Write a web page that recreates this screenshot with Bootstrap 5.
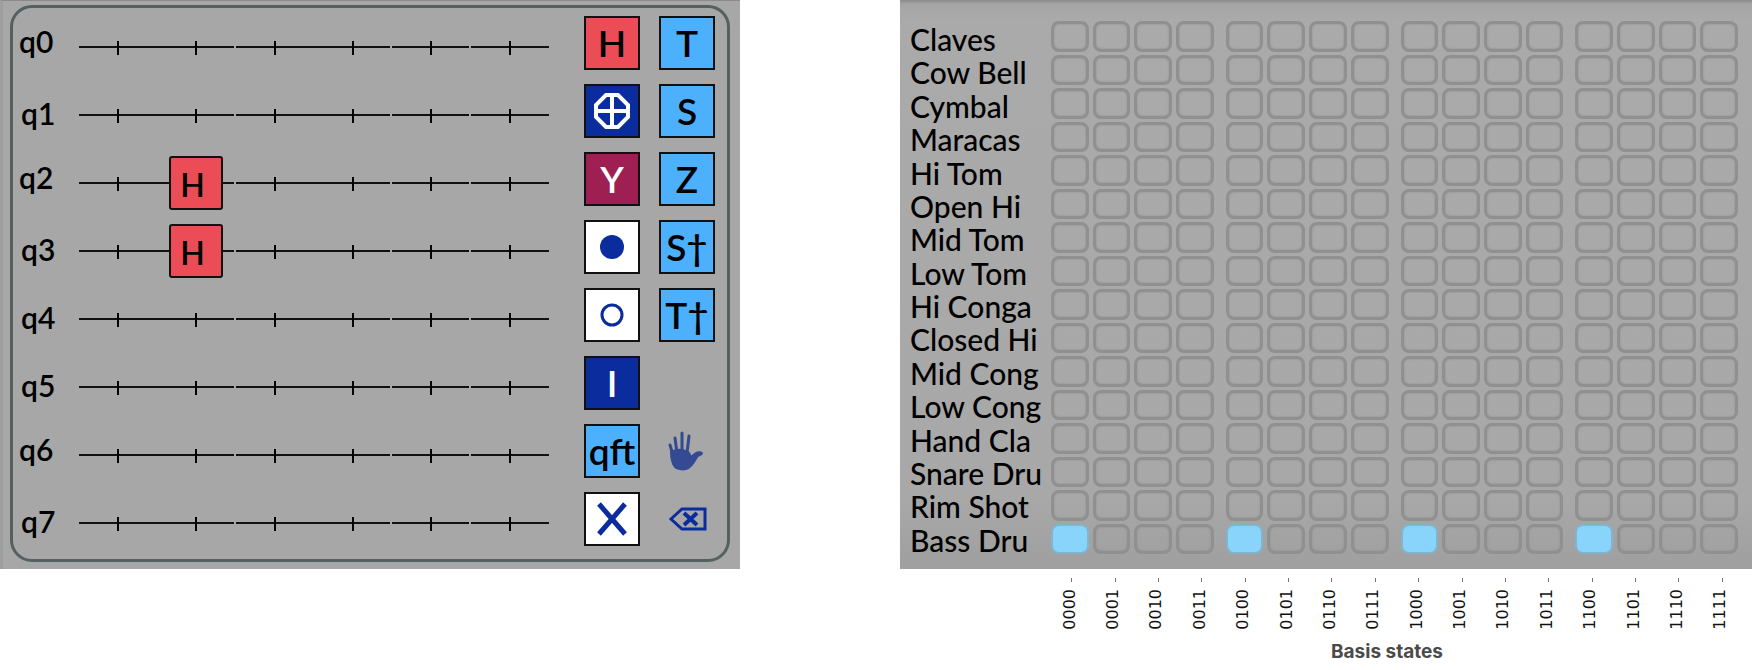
<!DOCTYPE html>
<html lang="en">
<head>
<meta charset="utf-8">
<meta name="viewport" content="width=device-width, initial-scale=1">
<title>Quantum drum sequencer</title>
<link rel="stylesheet" href="https://cdn.jsdelivr.net/npm/bootstrap@5.3.0/dist/css/bootstrap.min.css">
<style>
  :root { --panel: #a7a7a7; --frame: #556060; --navy: #0b2c9c; --sky: #4cb0fc; --red: #ec4c56; --plum: #9e1f51; }
  body { background: #fff; color: #000; font-family: Lato, "Liberation Sans", sans-serif; font-weight: 500; }
  .device { display: grid; grid-template-columns: 740fr 160fr 852fr; align-items: start; }
  .device > .steps-side { grid-column: 3; }

  /* circuit */
  .circuit { background: var(--panel); border-top: 1px solid #8a8a8a; border-left: 3px solid #9e9e9e; padding: 4px 10px 7px 7px; }
  .circuit-frame { border: 3px solid var(--frame); border-radius: 22px; padding: 8px 12px 13px 6px; }
  .wires { display: grid; grid-auto-rows: 54px; row-gap: 14px; }
  .wire { display: grid; grid-template-columns: 60px 1fr; }
  .wire-name { font-size: 30px; line-height: 54px; padding: 2px 0 0 2px; font-weight: 600; }
  .wire-name.high { padding: 0; line-height: 50px; }
  .slots { display: flex; padding-top: 7px; }
  .slot { flex: 1 1 0; height: 48px; border: 0; padding: 0;
    background: linear-gradient(#000, #000) center 18px / 2px 14px no-repeat, linear-gradient(#111, #111) 0 23px / 100% 2px no-repeat; }
  .slot.cut { background-size: 2px 14px, calc(100% - 2px) 2px; }
  .slot.filled { background: linear-gradient(#111, #111) 0 26px / calc(100% - 2px) 2px no-repeat; height: 54px; margin-top: -3px; }
  .placed { display: inline-block; width: 54px; height: 54px; border: 2px solid #111; border-radius: 3px; background: var(--red); color: #000; font-size: 32px; line-height: 54px; padding-right: 8px; font-weight: 600; }
  .palette { display: grid; grid-template-columns: 56px 56px; grid-auto-rows: 54px; gap: 14px 19px; margin-left: 35px; }
  .gate { border: 2px solid #111; padding: 0; color: #000; background: var(--sky); font-size: 37px; line-height: 48px; display: flex; align-items: center; justify-content: center; white-space: nowrap; font-weight: 600; }
  .gate.red { background: var(--red); }
  .gate.navy { background: var(--navy); color: #fff; }
  .gate.plum { background: var(--plum); color: #fff; }
  .gate.white { background: #fff; color: var(--navy); }
  .gate.tool { background: none; border: 0; color: var(--navy); }

  /* step sequencer */
  .sequencer { background: linear-gradient(#8a8a8a 0, #a5a5a5 4px, #aaa 20px, #a8a8a8 500px, #9f9f9f 100%); padding: 21px 14px 12px 10px; display: grid; grid-template-columns: 141px 1fr; }
  .drums { display: grid; grid-template-rows: repeat(16, 1fr); height: 536px; padding-top: 2px; font-size: 30px; line-height: 33px; white-space: nowrap; margin: 0; }
  .bars { display: grid; grid-template-columns: repeat(4, 1fr); column-gap: 12px; height: 533px; }
  .bar { display: grid; grid-template: repeat(16, 1fr) / repeat(4, 1fr); row-gap: 3px; column-gap: 4px; }
  .step { appearance: none; margin: 0; width: 100%; height: 100%; border: 3px solid #909090; border-radius: 8px; box-shadow: inset 0 0 2px #8c8c8c; }
  .step:checked { background: #88d4fb; border: 2px solid #83b4cb; box-shadow: none; }
  .axis { display: grid; grid-template-columns: repeat(16, 1fr); margin: 9px 8px 0 150px; }
  .state { display: flex; flex-direction: column; align-items: center; font: 16px/20px "DejaVu Sans", sans-serif; color: #111; }
  .state::before { content: ""; width: 1px; height: 4px; background: #777; margin-bottom: 7px; }
  .state span { writing-mode: vertical-rl; transform: rotate(180deg); padding-left: 4px; }
  .axis-title { font-family: Inter, sans-serif; font-size: 19px; line-height: 24px; font-weight: 700; color: #4a4a4a; margin: 10px 28px 0 150px; text-align: center; }
</style>
</head>
<body>
<main class="device">
  <section class="circuit" aria-label="Circuit">
    <div class="circuit-frame d-flex">
      <div class="wires flex-grow-1" id="wires"></div>
      <div class="palette">
        <button class="gate red" type="button">H</button>
        <button class="gate" type="button">T</button>
        <button class="gate navy" type="button" aria-label="Not"><svg width="36" height="36" viewBox="0 0 36 36" fill="none" stroke="#fff"><path stroke-width="4" d="M12 2H24L34 12V24L24 34H12L2 24V12Z"/><path stroke-width="4" d="M18 2V34M2 18H34"/></svg></button>
        <button class="gate" type="button">S</button>
        <button class="gate plum" type="button">Y</button>
        <button class="gate" type="button">Z</button>
        <button class="gate white" type="button" aria-label="Control"><svg width="24" height="24"><circle cx="12" cy="12" r="12" fill="currentColor"/></svg></button>
        <button class="gate" type="button">S†</button>
        <button class="gate white" type="button" aria-label="Anti-control"><svg width="24" height="24"><circle cx="12" cy="12" r="10" fill="none" stroke="currentColor" stroke-width="3"/></svg></button>
        <button class="gate" type="button">T†</button>
        <button class="gate navy" type="button">I</button>
        <span></span>
        <button class="gate" type="button">qft</button>
        <button class="gate tool" type="button" aria-label="Move"><svg width="38" height="40" viewBox="0 0 38 40" fill="none" stroke="#344a92" stroke-width="3" stroke-linecap="round" stroke-linejoin="round"><path d="M5 24 2 14M9 22 7 7M14 21 14 2M19 22 21 5"/><path stroke-width="2" fill="#344a92" d="M3 21C9 18 17 18 21 22L23 26 28 22C30 21 34 21 34 22.500 34 24 30 24 29 26 26 31 23 37 18 38 14 39 9 38 7 36 4 32 3 27 3 21Z"/></svg></button>
        <button class="gate white" type="button" aria-label="Swap"><svg width="30" height="36" viewBox="0 0 30 36" stroke="currentColor" stroke-width="5"><path d="M2 3 28 33M28 3 2 33"/></svg></button>
        <button class="gate tool" type="button" aria-label="Delete"><svg width="40" height="24" viewBox="0 0 40 24" fill="none" stroke="currentColor" stroke-width="3"><path d="M4 12 15 2H38V22H15Z"/><path stroke-width="4" d="M17 6 30 18M30 6 17 18"/></svg></button>
      </div>
    </div>
  </section>

  <section class="steps-side" aria-label="Drum steps">
    <div class="sequencer">
      <ul class="drums list-unstyled" id="drums"></ul>
      <div class="bars" id="bars"></div>
    </div>
    <div class="axis" id="axis"></div>
    <div class="axis-title">Basis states</div>
  </section>
</main>
<script src="https://cdn.jsdelivr.net/npm/bootstrap@5.3.0/dist/js/bootstrap.bundle.min.js"></script>
<script>
  const drums = ["Claves", "Cow Bell", "Cymbal", "Maracas", "Hi Tom", "Open Hi", "Mid Tom", "Low Tom", "Hi Conga",
    "Closed Hi", "Mid Cong", "Low Cong", "Hand Cla", "Snare Dru", "Rim Shot", "Bass Dru"];
  const highNames = [0, 2, 6];
  const placed = { "2-1": "H", "3-1": "H" };

  let wires = "";
  for (let q = 0; q < 8; q++) {
    let slots = "";
    for (let s = 0; s < 6; s++) {
      const gate = placed[q + "-" + s];
      const kind = gate ? " filled" : [1, 3, 4].includes(s) ? " cut" : "";
      slots += `<button type="button" class="slot${kind}" aria-label="q${q} slot ${s + 1}">${gate ? `<span class="placed">${gate}</span>` : ""}</button>`;
    }
    wires += `<div class="wire"><span class="wire-name${highNames.includes(q) ? " high" : ""}">q${q}</span><div class="slots">${slots}</div></div>`;
  }
  document.getElementById("wires").innerHTML = wires;

  document.getElementById("drums").innerHTML = drums.map(d => `<li>${d}</li>`).join("");

  let bars = "";
  for (let b = 0; b < 4; b++) {
    bars += '<div class="bar">';
    drums.forEach((d, r) => {
      for (let c = 0; c < 4; c++)
        bars += `<input type="checkbox" class="step" aria-label="${d} ${b * 4 + c + 1}"${r === 15 && c === 0 ? " checked" : ""}>`;
    });
    bars += "</div>";
  }
  document.getElementById("bars").innerHTML = bars;

  document.getElementById("axis").innerHTML = Array.from({ length: 16 }, (_, i) =>
    `<div class="state"><span>${i.toString(2).padStart(4, "0")}</span></div>`).join("");
</script>
</body>
</html>
